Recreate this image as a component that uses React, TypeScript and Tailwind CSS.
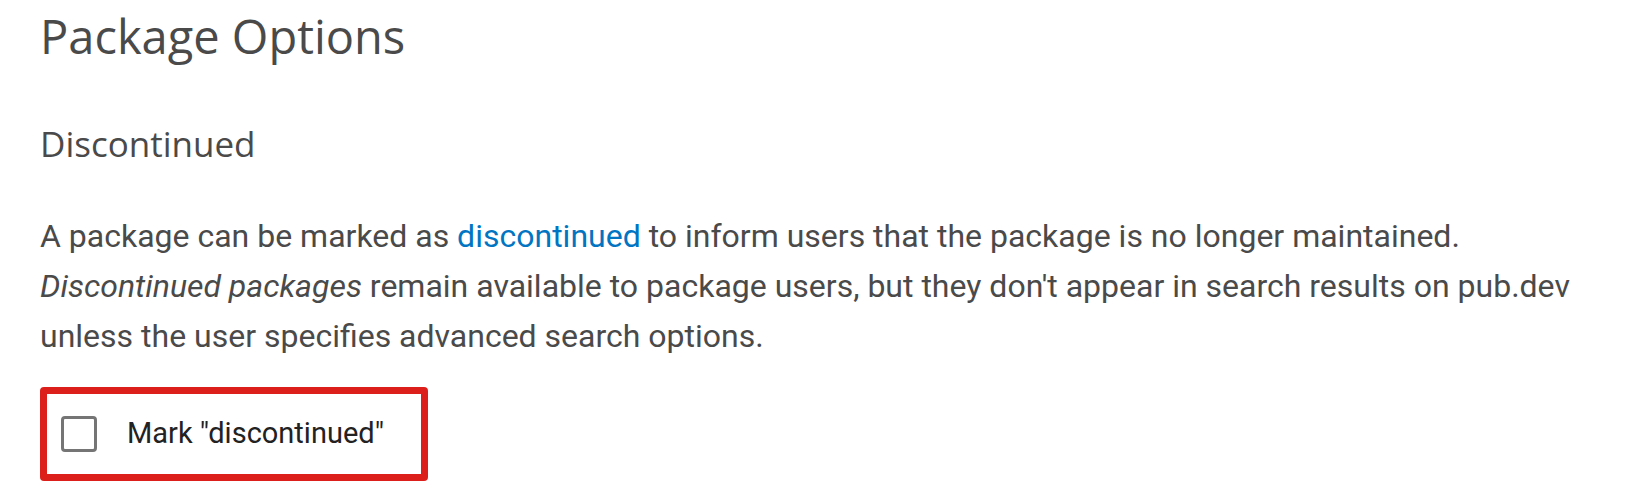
function App() {
    return (
        <div className="min-h-[496px] bg-white px-[40px] text-[#4a4a4a]">
            <h1 className="pt-[8px] text-[47px] leading-[56px] font-normal" style={{ fontFamily: '"Open Sans", sans-serif' }}>
                Package Options
            </h1>

            <h2 className="mt-[58px] text-[35px] leading-[44px] font-normal" style={{ fontFamily: '"Open Sans", sans-serif' }}>
                Discontinued
            </h2>

            <p className="mt-[45px] text-[32px] leading-[50px]" style={{ fontFamily: 'Roboto, sans-serif' }}>
                A package can be marked as <a className="text-[#0175c2]">discontinued</a> to inform users that the package is no longer maintained.
                <br />
                <em>Discontinued packages</em> remain available to package users, but they don't appear in search results on pub.dev
                <br />
                unless the user specifies advanced search options.
            </p>

            <div className="mt-[26px] flex h-[94px] w-[388px] items-center rounded-[4px] border-[7px] border-[#dc1f1a] pl-[14px]">
                <div className="h-[36px] w-[36px] rounded-[4px] border-[3px] border-[#757575]" />
                <span className="ml-[30px] text-[29px] text-[#222]" style={{ fontFamily: 'Roboto, sans-serif' }}>
                    Mark "discontinued"
                </span>
            </div>
        </div>
    )
}

export default App;
